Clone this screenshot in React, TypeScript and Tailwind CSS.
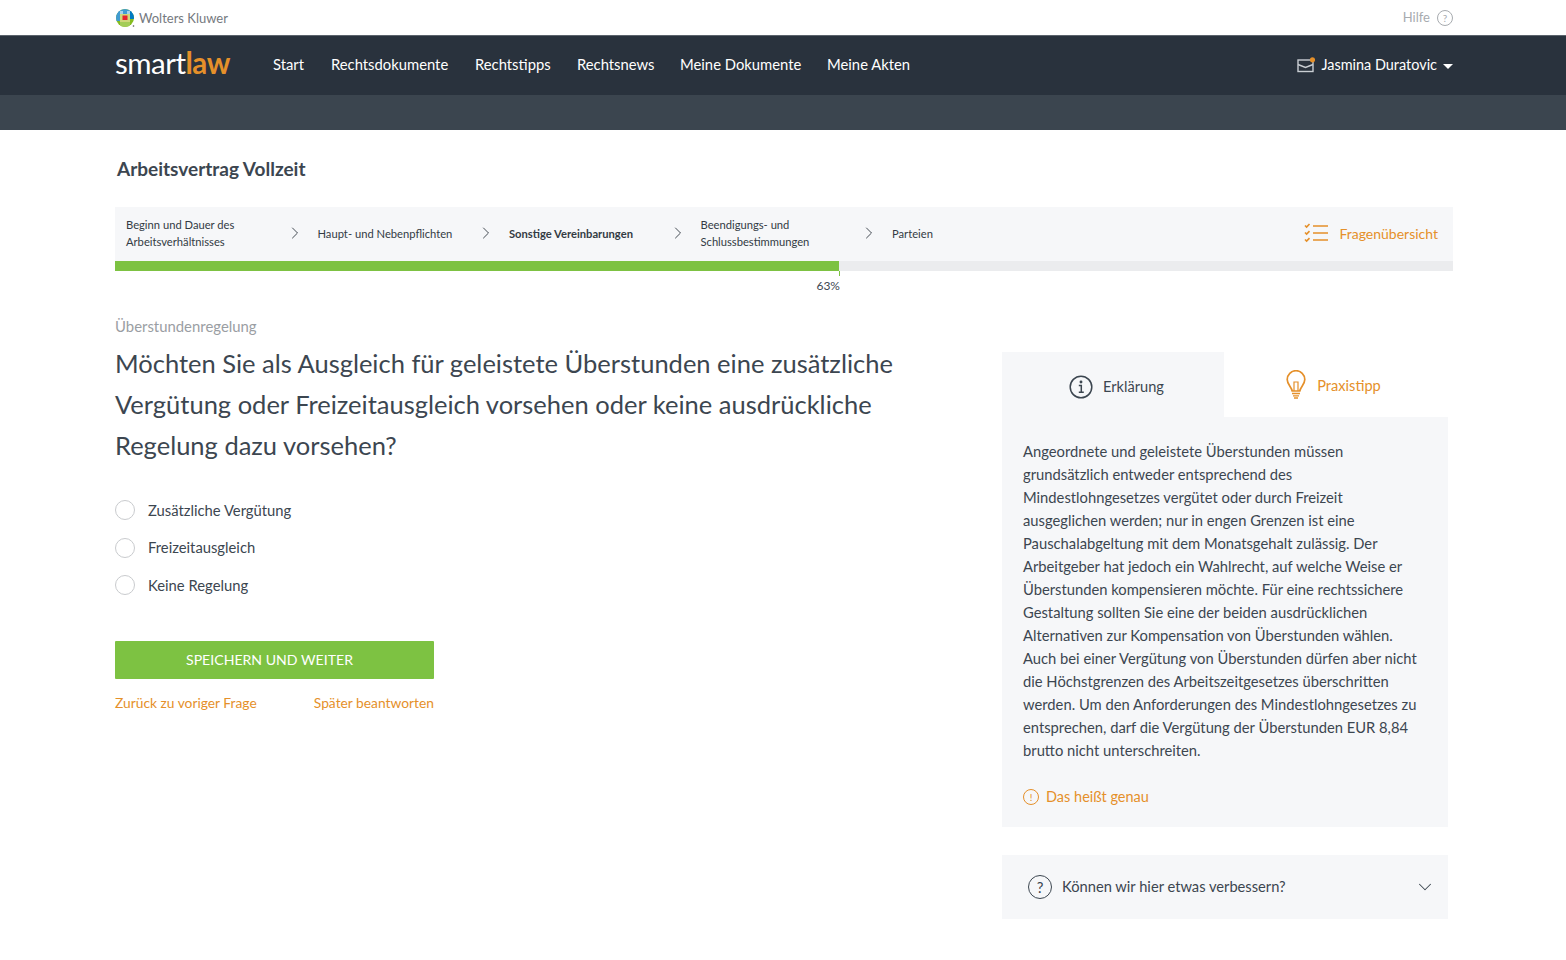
import { ChevronRight, ChevronDown } from 'lucide-react';

const FONT = "font-['Lato','Noto_Sans',sans-serif]";

const explanation = [
  'Angeordnete und geleistete Überstunden müssen',
  'grundsätzlich entweder entsprechend des',
  'Mindestlohngesetzes vergütet oder durch Freizeit',
  'ausgeglichen werden; nur in engen Grenzen ist eine',
  'Pauschalabgeltung mit dem Monatsgehalt zulässig. Der',
  'Arbeitgeber hat jedoch ein Wahlrecht, auf welche Weise er',
  'Überstunden kompensieren möchte. Für eine rechtssichere',
  'Gestaltung sollten Sie eine der beiden ausdrücklichen',
  'Alternativen zur Kompensation von Überstunden wählen.',
  'Auch bei einer Vergütung von Überstunden dürfen aber nicht',
  'die Höchstgrenzen des Arbeitszeitgesetzes überschritten',
  'werden. Um den Anforderungen des Mindestlohngesetzes zu',
  'entsprechen, darf die Vergütung der Überstunden EUR 8,84',
  'brutto nicht unterschreiten.',
];

const navItems = [
  { label: 'Start', width: 'w-[58px]' },
  { label: 'Rechtsdokumente', width: 'w-[144px]' },
  { label: 'Rechtstipps', width: 'w-[102px]' },
  { label: 'Rechtsnews', width: 'w-[103px]' },
  { label: 'Meine Dokumente', width: 'w-[147px]' },
  { label: 'Meine Akten', width: 'w-[90px]' },
];

function WkLogo() {
  return (
    <svg width="20" height="20" viewBox="0 0 20 20" className="shrink-0">
      <defs>
        <clipPath id="wk">
          <circle cx="10" cy="10" r="9" />
        </clipPath>
      </defs>
      <g clipPath="url(#wk)">
        <rect width="20" height="20" fill="#85bc20" />
        <rect width="20" height="6" fill="#409bd2" />
        <rect x="0" y="0" width="5" height="13" fill="#409bd2" />
        <rect x="15" y="0" width="5" height="11" fill="#007ac3" />
        <rect x="5" y="6" width="10" height="8" fill="#cfd77a" />
        <rect x="7.5" y="7.5" width="5" height="4.5" fill="#e5202e" />
        <rect x="5" y="3" width="3" height="3" fill="#a6d1ea" />
        <rect x="12" y="3" width="3" height="3" fill="#a6d1ea" />
        <rect x="5" y="14" width="10" height="6" fill="#a4cd58" />
      </g>
      <circle cx="18.5" cy="18" r="0.8" fill="#555" />
    </svg>
  );
}

function MailIcon() {
  return (
    <svg width="18" height="16" viewBox="0 0 18 16" fill="none" className="shrink-0">
      <rect x="1" y="3" width="15" height="11.5" stroke="#c9ced3" strokeWidth="1.4" />
      <path d="M1 7.5l7.5 3 7.5-3" stroke="#c9ced3" strokeWidth="1.4" />
      <circle cx="15.5" cy="2.8" r="2.6" fill="#e5902a" />
    </svg>
  );
}

function ChecklistIcon() {
  return (
    <svg width="25" height="20" viewBox="0 0 25 20" fill="none" stroke="#e5902a" strokeWidth="1.6">
      <path d="M1 2.5l1.6 1.6L5.5 1M1 9.5l1.6 1.6 2.9-3M1 16.5l1.6 1.6 2.9-3" />
      <path d="M9 3h15M9 10h15M9 17h15" />
    </svg>
  );
}

function BulbIcon() {
  return (
    <svg width="20" height="29" viewBox="0 0 20 29" fill="none" stroke="#e5902a" strokeWidth="1.7">
      <path d="M6.2 21C5.6 17 1.2 14.5 1.2 9.5a8.8 8.800 0 0 1 17.6 0c0 5-4.4 7.500-5 11.500z" />
      <path d="M8 21V12h4v9" strokeWidth="1.2" />
      <path d="M6 23.500h8M7 25.800h6M8 28h4" strokeWidth="1.3" />
    </svg>
  );
}

function InfoIcon() {
  return (
    <svg width="24" height="24" viewBox="0 0 24 24" fill="none" stroke="#3c4650" strokeWidth="1.5">
      <circle cx="12" cy="12" r="10.800" />
      <path d="M9.800 10.500H12.300V17M9.800 17.200h5" />
      <circle cx="12" cy="7" r="0.700" fill="#3c4650" />
    </svg>
  );
}

function StepArrow() {
  return <ChevronRight size={20} strokeWidth={1.1} className="shrink-0" />;
}

export default function App() {
  return (
    <div className={`${FONT} min-h-[960px] bg-white text-[#3c4650]`}>
      {/* top bar */}
      <div className="flex h-[36px] items-center justify-between border-b border-[#5b636c] bg-white px-[113px]">
        <div className="flex items-center gap-[4px] pl-[2px]">
          <WkLogo />
          <span className="pt-[2px] text-[13px] text-[#75797e]">Wolters Kluwer</span>
        </div>
        <div className="flex items-center gap-[7px]">
          <span className="text-[13px] text-[#a7abaf]">Hilfe</span>
          <span className="grid h-[16px] w-[16px] place-items-center rounded-full border border-[#a7abaf] text-[10px] text-[#a7abaf]">
            ?
          </span>
        </div>
      </div>

      {/* main nav */}
      <div className="flex h-[59px] items-center bg-[#29323d] pl-[115px] pr-[113px] text-white">
        <div className="w-[158px] pb-[5px] text-[29.5px] leading-none tracking-[-0.5px]">
          smart<span className="font-bold text-[#e5902a]">law</span>
        </div>
        <nav className="flex flex-1 items-center pb-[2px] text-[14.8px]">
          {navItems.map((item) => (
            <span key={item.label} className={`${item.width} shrink-0`}>
              {item.label}
            </span>
          ))}
        </nav>
        <div className="flex items-center text-[14.45px]">
          <MailIcon />
          <span className="ml-[6px] pb-[2px]">Jasmina Duratovic</span>
          <span className="ml-[6px] mt-[2px] h-0 w-0 border-x-[5px] border-t-[5px] border-x-transparent border-t-white" />
        </div>
      </div>
      <div className="h-[35px] bg-[#3b454f]" />

      <div className="px-[115px]">
        <h1 className="pl-[2px] pt-[26px] pb-[1px] text-[19px] font-bold leading-[25px]">Arbeitsvertrag Vollzeit</h1>

        {/* steps */}
        <div className="mt-[25px] flex h-[54px] w-[1338px] items-center bg-[#f6f7f9] pb-[2px] pl-[11px] pr-[15px] text-[11.2px] leading-[17px] text-[#333b44]">
          <span className="w-[158.500px]">Beginn und Dauer des<br />Arbeitsverhältnisses</span>
          <StepArrow />
          <span className="ml-[13px] w-[158.500px]">Haupt- und Nebenpflichten</span>
          <StepArrow />
          <span className="ml-[13px] w-[158.500px] font-bold">Sonstige Vereinbarungen</span>
          <StepArrow />
          <span className="ml-[13px] w-[158.500px]">Beendigungs- und<br />Schlussbestimmungen</span>
          <StepArrow />
          <span className="ml-[13px]">Parteien</span>
          <div className="ml-auto flex items-center gap-[10px] text-[14px] text-[#e5902a]">
            <ChecklistIcon />
            <span>Fragenübersicht</span>
          </div>
        </div>

        {/* progress */}
        <div className="h-[10px] w-[1338px] bg-[#ebecee]">
          <div className="h-full w-[724px] bg-[#7dc242]" />
        </div>
        <div className="relative flex w-[725px] justify-end pt-[7px] text-[12px] leading-[15px] text-[#3c4650]">
          <span className="absolute right-0 top-0 h-[5px] w-[1px] bg-[#7dc242]" />
          63%
        </div>

        <div className="flex items-start">
          {/* question */}
          <div className="w-[887px] shrink-0">
            <p className="pt-[21px] text-[14.9px] leading-[24px] text-[#9a9ea3]">Überstundenregelung</p>
            <h2 className="mt-[5px] text-[25.5px] leading-[41px] text-[#3c4650]">
              Möchten Sie als Ausgleich für geleistete Überstunden eine zusätzliche<br />
              Vergütung oder Freizeitausgleich vorsehen oder keine ausdrückliche<br />
              Regelung dazu vorsehen?
            </h2>
            <div className="mt-[34px] flex flex-col gap-[17.500px]">
              {['Zusätzliche Vergütung', 'Freizeitausgleich', 'Keine Regelung'].map((label) => (
                <label key={label} className="flex h-[20px] items-center gap-[13px] text-[14.8px]">
                  <span className="h-[20px] w-[20px] rounded-full border border-[#c9cbce] bg-white" />
                  {label}
                </label>
              ))}
            </div>
            <button className="mt-[46px] block h-[38px] w-[319px] rounded-[1px] bg-[#7dc242] pr-[10px] text-[14.1px] text-white">
              SPEICHERN UND WEITER
            </button>
            <div className="mt-[15px] flex w-[319px] justify-between text-[13.8px] leading-[18px] text-[#e5902a]">
              <span>Zurück zu voriger Frage</span>
              <span>Später beantworten</span>
            </div>
          </div>

          {/* side panel */}
          <div className="mt-[59px] w-[446px]">
            <div className="flex h-[65px]">
              <div className="flex w-[222px] items-center justify-center gap-[10px] bg-[#f6f7f9] pl-[7px] pt-[4px] text-[14.6px]">
                <InfoIcon />
                <span>Erklärung</span>
              </div>
              <div className="flex flex-1 items-center justify-center gap-[11px] pr-[5px] text-[14.6px] text-[#e5902a]">
                <BulbIcon />
                <span className="pt-[3px]">Praxistipp</span>
              </div>
            </div>
            <div className="h-[410px] bg-[#f6f7f9] px-[21px] pt-[23px] text-[14.75px] leading-[23px]">
              {explanation.map((line) => (
                <div key={line} className="whitespace-nowrap">
                  {line}
                </div>
              ))}
              <div className="mt-[23px] flex items-center gap-[7px] text-[14.5px] text-[#e5902a]">
                <span className="grid h-[16px] w-[16px] place-items-center rounded-full border border-[#e5902a] text-[10px] leading-none">
                  !
                </span>
                Das heißt genau
              </div>
            </div>
            <div className="mt-[28px] flex h-[64px] items-center bg-[#f6f7f9] pl-[26px] pr-[12px] text-[14.7px]">
              <span className="grid h-[24px] w-[24px] place-items-center rounded-full border-[1.5px] border-[#3c4650] text-[15px]">
                ?
              </span>
              <span className="ml-[10px] flex-1 pb-[2px]">Können wir hier etwas verbessern?</span>
              <ChevronDown size={22} strokeWidth={1.1} />
            </div>
          </div>
        </div>
      </div>
    </div>
  );
}
